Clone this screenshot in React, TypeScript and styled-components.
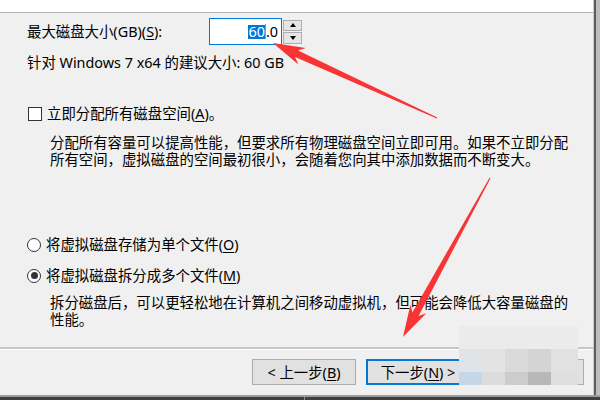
import React from "react";
import styled, { createGlobalStyle } from "styled-components";

const GlobalStyle = createGlobalStyle`
  html, body { margin: 0; padding: 0; background: #f0f0f0; }
  body { width: 600px; height: 400px; overflow: hidden; }
`;

const FONT = `"Noto Sans", "Noto Sans CJK SC", sans-serif`;

const Screen = styled.div`
  position: relative;
  width: 600px;
  height: 400px;
  display: flex;
  flex-direction: column;
  font-family: ${FONT};
  font-size: 14.4px;
  color: #000;
  background: #f0f0f0;
  overflow: hidden;
`;

const WindowRow = styled.div`
  display: flex;
  height: 395px;
`;

const Dialog = styled.div`
  flex: 1;
  display: flex;
  flex-direction: column;
  background: #f0f0f0;
  border-right: 1px solid #c9c9c9;
`;

const RightFrame = styled.div`
  width: 4px;
  border-left: 2px solid #5c5c5c;
  background: #bdbdbd;
`;

const BottomFrame = styled.div`
  height: 5px;
  box-sizing: border-box;
  border-top: 2px solid #9c9c9c;
  background: #3f3f3f;
  display: flex;
`;

const FrameTick = styled.div`
  margin-left: 304px;
  width: 1px;
  background: #8c8c8c;
`;

const Header = styled.div`
  height: 12px;
  background: #fff;
  border-bottom: 1px solid #b4b4b4;
`;

const Body = styled.div`
  flex: 1;
  display: flex;
  flex-direction: column;
  padding-left: 27px;
`;

const SizeRow = styled.div`
  margin-top: 5px;
  height: 27px;
  display: grid;
  grid-template-columns: 181px 73px 19px;
  column-gap: 1px;
  align-items: center;
`;

const Label = styled.div`
  line-height: 17px;
  white-space: nowrap;
`;

const Key = styled.span`
  text-decoration: underline;
  text-underline-offset: 2px;
  text-decoration-thickness: 1px;
`;

const NumberBox = styled.div`
  height: 27px;
  box-sizing: border-box;
  border: 1px solid #0078d7;
  background: #fff;
  display: flex;
  justify-content: flex-end;
  align-items: center;
  padding-right: 3px;
  white-space: nowrap;
`;

const Selected = styled.span`
  background: #0078d7;
  color: #fff;
  line-height: 14px;
  height: 14px;
  display: inline-flex;
  align-items: center;
`;

const Caret = styled.span`
  width: 1px;
  height: 15px;
  background: #e2892a;
`;

const Rest = styled.span`
  line-height: 14px;
`;

const SpinGroup = styled.div`
  height: 24px;
  display: flex;
  flex-direction: column;
  gap: 1px;
`;

const SpinButton = styled.div`
  flex: 1;
  box-sizing: border-box;
  border: 1px solid #adadad;
  background: #e5e5e5;
  display: flex;
  align-items: center;
  justify-content: center;
`;

const Tri = styled.span<{ $down?: boolean }>`
  width: 0;
  height: 0;
  border-left: 3.5px solid transparent;
  border-right: 3.5px solid transparent;
  ${(p) =>
    p.$down ? "border-top: 4px solid #000;" : "border-bottom: 4px solid #000;"}
`;

const Recommend = styled.div`
  margin-top: 9px;
  line-height: 17px;
  white-space: nowrap;
`;

const OptionRow = styled.div<{ $mt: number; $gap: number }>`
  margin-top: ${(p) => p.$mt}px;
  height: 17px;
  display: flex;
  align-items: center;
  gap: ${(p) => p.$gap}px;
  white-space: nowrap;
  line-height: 17px;
`;

const CheckBox = styled.span`
  margin-left: 1px;
  width: 14px;
  height: 14px;
  box-sizing: border-box;
  border: 1px solid #333;
  background: #fff;
`;

const Radio = styled.span<{ $checked?: boolean }>`
  width: 14px;
  height: 14px;
  box-sizing: border-box;
  border: 1px solid #333;
  border-radius: 50%;
  background: #fff;
  display: flex;
  align-items: center;
  justify-content: center;
  &::after {
    content: "";
    width: 7px;
    height: 7px;
    border-radius: 50%;
    background: ${(p) => (p.$checked ? "#333" : "transparent")};
  }
`;

const Para = styled.div<{ $mt: number }>`
  margin: ${(p) => p.$mt}px 0 0 23px;
  line-height: 16.5px;
  white-space: nowrap;
`;

const Footer = styled.div`
  margin-top: auto;
`;

const FooterSep = styled.div`
  border-top: 2px solid #c5c5c5;
  border-bottom: 1px solid #fff;
`;

const ButtonBar = styled.div`
  height: 45px;
  box-sizing: border-box;
  padding: 9px 9px 0 0;
  display: flex;
  justify-content: flex-end;
  align-items: flex-start;
  gap: 10px;
`;

const Button = styled.div<{ $primary?: boolean }>`
  width: 104px;
  height: 26px;
  box-sizing: border-box;
  border: ${(p) => (p.$primary ? "2px solid #0078d7" : "1px solid #adadad")};
  background: #e1e1e1;
  display: flex;
  align-items: center;
  justify-content: center;
  white-space: nowrap;
  line-height: 17px;
`;

const Mosaic = styled.div`
  position: absolute;
  left: 459px;
  top: 326px;
  display: grid;
  grid-template-columns: 23px 23px 23px 23px 27px;
  grid-template-rows: 23px 23px 13px;
`;

const Cell = styled.div<{ $c: string }>`
  background: ${(p) => p.$c};
`;

const Overlay = styled.svg`
  position: absolute;
  left: 0;
  top: 0;
  pointer-events: none;
`;

const mosaicColors = [
  "#ebebeb", "#ebebeb", "#ebebeb", "#ebebeb", "#ebebeb",
  "#dfe4eb", "#e3e3e3", "#dadada", "#d4d4d4", "#e1e1e1",
  "#c6d6e6", "#dcdcdc", "#cccccc", "#b8b8b8", "#dedede",
];

export default function App() {
  return (
    <>
      <GlobalStyle />
      <Screen>
        <WindowRow>
          <Dialog>
            <Header />
            <Body>
              <SizeRow>
                <Label>
                  最大磁盘大小(GB)(<Key>S</Key>):
                </Label>
                <NumberBox>
                  <Selected>60</Selected>
                  <Caret />
                  <Rest>.0</Rest>
                </NumberBox>
                <SpinGroup>
                  <SpinButton>
                    <Tri />
                  </SpinButton>
                  <SpinButton>
                    <Tri $down />
                  </SpinButton>
                </SpinGroup>
              </SizeRow>
              <Recommend>针对 Windows 7 x64 的建议大小: 60 GB</Recommend>
              <OptionRow $mt={34} $gap={5}>
                <CheckBox />
                <span>
                  立即分配所有磁盘空间(<Key>A</Key>)。
                </span>
              </OptionRow>
              <Para $mt={13}>
                分配所有容量可以提高性能，但要求所有物理磁盘空间立即可用。如果不立即分配
                <br />
                所有空间，虚拟磁盘的空间最初很小，会随着您向其中添加数据而不断变大。
              </Para>
              <OptionRow $mt={68} $gap={5}>
                <Radio />
                <span>
                  将虚拟磁盘存储为单个文件(<Key>O</Key>)
                </span>
              </OptionRow>
              <OptionRow $mt={14} $gap={5}>
                <Radio $checked />
                <span>
                  将虚拟磁盘拆分成多个文件(<Key>M</Key>)
                </span>
              </OptionRow>
              <Para $mt={11}>
                拆分磁盘后，可以更轻松地在计算机之间移动虚拟机，但可能会降低大容量磁盘的
                <br />
                性能。
              </Para>
            </Body>
            <Footer>
              <FooterSep />
              <ButtonBar>
                <Button>
                  &lt; 上一步(<Key>B</Key>)
                </Button>
                <Button $primary>
                  下一步(<Key>N</Key>) &gt;
                </Button>
                <Button>取消</Button>
              </ButtonBar>
            </Footer>
          </Dialog>
          <RightFrame />
        </WindowRow>
        <BottomFrame>
          <FrameTick />
        </BottomFrame>

        <Mosaic>
          {mosaicColors.map((c, i) => (
            <Cell key={i} $c={c} />
          ))}
        </Mosaic>

        <Overlay width={600} height={400} viewBox="0 0 600 400">
          <polygon
            fill="#f83434"
            points="273,43 305.8,48.1 298.1,50.6 437.25,117.45 436.75,118.55 295.1,57 298.4,64.5"
          />
          <polygon
            fill="#f83434"
            points="403,337 410.5,304.6 412.4,312.5 489.5,177.7 490.5,178.3 418.6,315.9 426.3,313.2"
          />
        </Overlay>
      </Screen>
    </>
  );
}
